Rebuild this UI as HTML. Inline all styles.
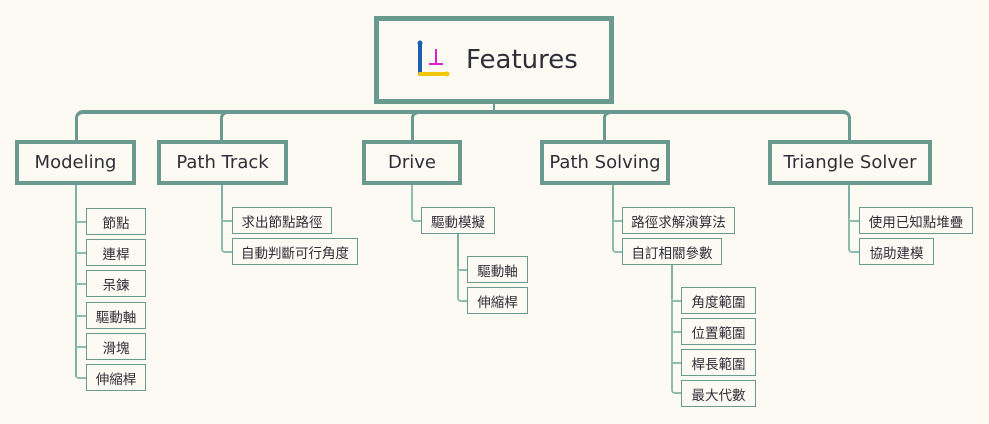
<!DOCTYPE html><html><head><meta charset="utf-8"><style>
body{margin:0;width:989px;height:424px;background:#fdfaf3;position:relative;overflow:hidden;font-family:"Liberation Sans","Noto Sans CJK TC",sans-serif;color:#2e2e38}
.a{position:absolute;box-sizing:border-box}
.l1{border:4px solid #6a9a8f;background:#fdfaf3;font-size:18px;display:flex;align-items:center;justify-content:center;font-family:"DejaVu Sans","Noto Sans CJK TC",sans-serif}
.c{border:1.5px solid #6a9a8f;background:#fdfaf3;font-size:13.5px;display:flex;align-items:center;justify-content:center}
.v{background:#7fb0a5;width:2px}
.h{background:#8fbcb1;height:2px}
.vl{border-left:2px solid #8fbcb1;border-bottom:2px solid #8fbcb1;border-bottom-left-radius:4px}
</style></head><body>
<div class="a" style="left:75px;top:110px;width:776px;height:30px;border:4px solid #6a9a8f;border-bottom:none;border-radius:8px 8px 0 0;border-left-width:3px;border-right-width:3px"></div>
<div class="a" style="left:220px;top:110px;width:10px;height:30px;border-left:3px solid #6a9a8f;border-top:4px solid #6a9a8f;border-top-left-radius:8px"></div>
<div class="a" style="left:411px;top:110px;width:10px;height:30px;border-left:3px solid #6a9a8f;border-top:4px solid #6a9a8f;border-top-left-radius:8px"></div>
<div class="a" style="left:603px;top:110px;width:10px;height:30px;border-left:3px solid #6a9a8f;border-top:4px solid #6a9a8f;border-top-left-radius:8px"></div>
<div class="a" style="left:493px;top:100px;width:2px;height:12px;background:#6a9a8f"></div>
<div class="a l1" style="left:374px;top:16px;width:240px;height:88px;border-width:5px;font-size:26px;justify-content:flex-start;padding-left:34px">
<svg width="40" height="42" viewBox="0 0 40 42" style="margin-right:13px"><rect x="5" y="3" width="4" height="34" rx="2" fill="#1a5fb0"/><circle cx="7" cy="4" r="2.5" fill="#1a5fb0"/><rect x="5" y="33" width="30" height="4" rx="2" fill="#f2c80f"/><circle cx="34" cy="35" r="2.5" fill="#f2c80f"/><path d="M23 10v15M16 25h14" stroke="#e020d0" stroke-width="2" fill="none"/></svg>Features</div>
<div class="a l1" style="left:15px;top:140px;width:121px;height:45px">Modeling</div>
<div class="a l1" style="left:157px;top:140px;width:131px;height:45px">Path Track</div>
<div class="a l1" style="left:362px;top:140px;width:100px;height:45px">Drive</div>
<div class="a l1" style="left:540px;top:140px;width:130px;height:45px">Path Solving</div>
<div class="a l1" style="left:768px;top:140px;width:164px;height:45px">Triangle Solver</div>
<div class="a v" style="left:75px;top:185px;height:192px"></div>
<div class="a h" style="left:76px;top:221px;width:10px"></div>
<div class="a h" style="left:76px;top:252px;width:10px"></div>
<div class="a h" style="left:76px;top:283px;width:10px"></div>
<div class="a h" style="left:76px;top:315px;width:10px"></div>
<div class="a h" style="left:76px;top:346px;width:10px"></div>
<div class="a vl" style="left:75px;top:360px;width:11px;height:19px;border-left:none"></div>
<div class="a c" style="left:86px;top:208px;width:60px;height:27px">節點</div>
<div class="a c" style="left:86px;top:239px;width:60px;height:27px">連桿</div>
<div class="a c" style="left:86px;top:270px;width:60px;height:27px">呆鍊</div>
<div class="a c" style="left:86px;top:302px;width:60px;height:27px">驅動軸</div>
<div class="a c" style="left:86px;top:333px;width:60px;height:27px">滑塊</div>
<div class="a c" style="left:86px;top:364px;width:60px;height:27px">伸縮桿</div>
<div class="a v" style="left:221px;top:185px;height:35px"></div>
<div class="a h" style="left:222px;top:220px;width:10px"></div>
<div class="a vl" style="left:221px;top:218px;width:11px;height:35px"></div>
<div class="a c" style="left:232px;top:207px;width:100px;height:27px">求出節點路徑</div>
<div class="a c" style="left:232px;top:238px;width:126px;height:27px">自動判斷可行角度</div>
<div class="a vl" style="left:411px;top:185px;width:10px;height:37px"></div>
<div class="a c" style="left:421px;top:207px;width:74px;height:27px">驅動模擬</div>
<div class="a v" style="left:457px;top:234px;height:35px"></div>
<div class="a h" style="left:458px;top:269px;width:9px"></div>
<div class="a vl" style="left:457px;top:266px;width:10px;height:36px"></div>
<div class="a c" style="left:467px;top:256px;width:61px;height:27px">驅動軸</div>
<div class="a c" style="left:467px;top:287px;width:61px;height:27px">伸縮桿</div>
<div class="a v" style="left:612px;top:185px;height:35px"></div>
<div class="a h" style="left:613px;top:220px;width:10px"></div>
<div class="a vl" style="left:612px;top:218px;width:10px;height:35px"></div>
<div class="a c" style="left:622px;top:207px;width:113px;height:27px">路徑求解演算法</div>
<div class="a c" style="left:622px;top:238px;width:100px;height:27px">自訂相關參數</div>
<div class="a v" style="left:671px;top:265px;height:35px"></div>
<div class="a h" style="left:672px;top:300px;width:10px"></div>
<div class="a h" style="left:672px;top:331px;width:10px"></div>
<div class="a h" style="left:672px;top:362px;width:10px"></div>
<div class="a vl" style="left:671px;top:298px;width:11px;height:96px"></div>
<div class="a c" style="left:681px;top:287px;width:75px;height:27px">角度範圍</div>
<div class="a c" style="left:681px;top:318px;width:75px;height:27px">位置範圍</div>
<div class="a c" style="left:681px;top:349px;width:75px;height:27px">桿長範圍</div>
<div class="a c" style="left:681px;top:380px;width:75px;height:27px">最大代數</div>
<div class="a v" style="left:848px;top:185px;height:35px"></div>
<div class="a h" style="left:849px;top:220px;width:10px"></div>
<div class="a vl" style="left:848px;top:218px;width:11px;height:35px"></div>
<div class="a c" style="left:859px;top:207px;width:114px;height:27px">使用已知點堆疊</div>
<div class="a c" style="left:859px;top:238px;width:75px;height:27px">協助建模</div>
</body></html>
